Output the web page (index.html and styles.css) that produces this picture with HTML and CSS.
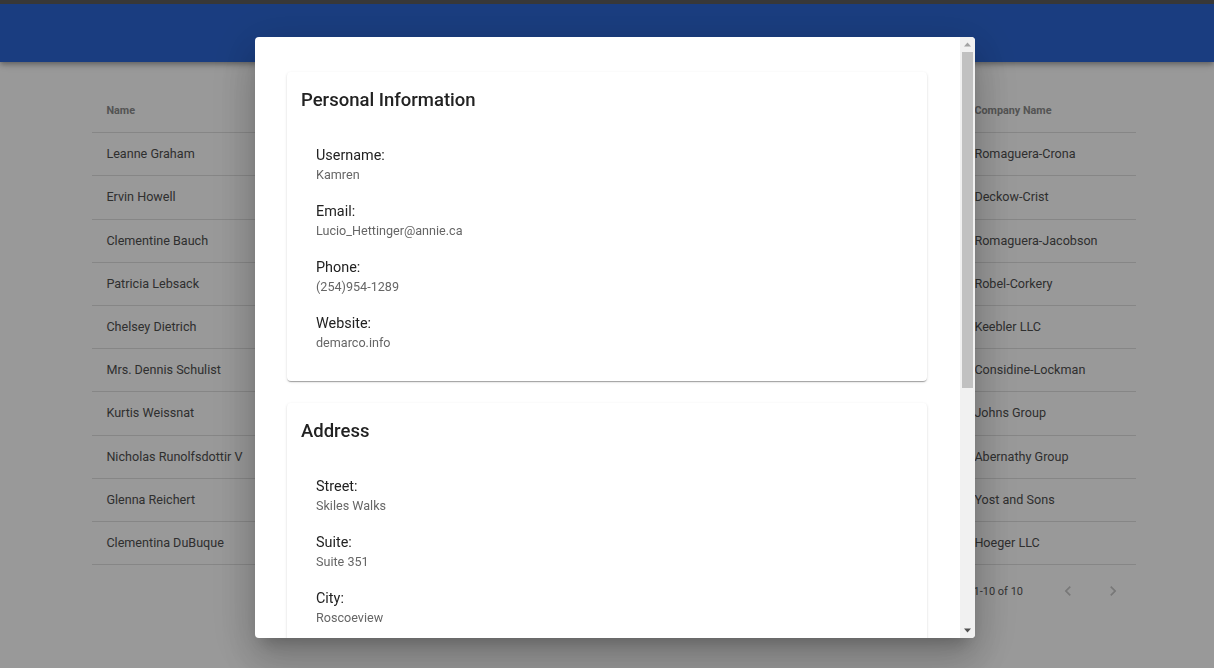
FILE: index.html
```html
<!DOCTYPE html>
<html lang="en">
<head>
<meta charset="utf-8">
<title>Users</title>
<link rel="stylesheet" href="styles.css">
</head>
<body>
<header class="topbar">
  <div class="topstrip"></div>
  <div class="appbar"></div>
</header>
<main class="content">
  <table class="users">
    <colgroup>
      <col class="c-name"><col class="c-user"><col class="c-email"><col class="c-city"><col class="c-company">
    </colgroup>
    <thead>
      <tr><th>Name</th><th>Username</th><th>Email</th><th>City</th><th>Company Name</th></tr>
    </thead>
    <tbody>
      <tr><td>Leanne Graham</td><td>Bret</td><td>Sincere@april.biz</td><td>Gwenborough</td><td>Romaguera-Crona</td></tr>
      <tr><td>Ervin Howell</td><td>Antonette</td><td>Shanna@melissa.tv</td><td>Wisokyburgh</td><td>Deckow-Crist</td></tr>
      <tr><td>Clementine Bauch</td><td>Samantha</td><td>Nathan@yesenia.net</td><td>McKenziehaven</td><td>Romaguera-Jacobson</td></tr>
      <tr><td>Patricia Lebsack</td><td>Karianne</td><td>Julianne.OConner@kory.org</td><td>South Elvis</td><td>Robel-Corkery</td></tr>
      <tr><td>Chelsey Dietrich</td><td>Kamren</td><td>Lucio_Hettinger@annie.ca</td><td>Roscoeview</td><td>Keebler LLC</td></tr>
      <tr><td>Mrs. Dennis Schulist</td><td>Leopoldo_Corkery</td><td>Karley_Dach@jasper.info</td><td>South Christy</td><td>Considine-Lockman</td></tr>
      <tr><td>Kurtis Weissnat</td><td>Elwyn.Skiles</td><td>Telly.Hoeger@billy.biz</td><td>Howemouth</td><td>Johns Group</td></tr>
      <tr><td>Nicholas Runolfsdottir V</td><td>Maxime_Nienow</td><td>Sherwood@rosamond.me</td><td>Aliyaview</td><td>Abernathy Group</td></tr>
      <tr><td>Glenna Reichert</td><td>Delphine</td><td>Chaim_McDermott@dana.io</td><td>Bartholomebury</td><td>Yost and Sons</td></tr>
      <tr><td>Clementina DuBuque</td><td>Moriah.Stanton</td><td>Rey.Padberg@karina.biz</td><td>Lebsackbury</td><td>Hoeger LLC</td></tr>
    </tbody>
  </table>
  <div class="pagination">
    <span class="range">1-10 of 10</span>
    <button class="pg-btn" aria-label="Previous page">
      <svg viewBox="0 0 24 24" width="24" height="24"><path d="M15.41 7.41 14 6l-6 6 6 6 1.41-1.41L10.83 12z"/></svg>
    </button>
    <button class="pg-btn" aria-label="Next page">
      <svg viewBox="0 0 24 24" width="24" height="24"><path d="M10 6 8.59 7.41 13.17 12l-4.58 4.59L10 18l6-6z"/></svg>
    </button>
  </div>
</main>

<div class="backdrop"></div>

<div class="modal" role="dialog">
  <div class="modal-body">
    <section class="card">
      <h2 class="card-title">Personal Information</h2>
      <div class="fields">
        <div class="field"><div class="label">Username:</div><div class="value">Kamren</div></div>
        <div class="field"><div class="label">Email:</div><div class="value">Lucio_Hettinger@annie.ca</div></div>
        <div class="field"><div class="label">Phone:</div><div class="value">(254)954-1289</div></div>
        <div class="field"><div class="label">Website:</div><div class="value">demarco.info</div></div>
      </div>
    </section>
    <section class="card">
      <h2 class="card-title">Address</h2>
      <div class="fields">
        <div class="field"><div class="label">Street:</div><div class="value">Skiles Walks</div></div>
        <div class="field"><div class="label">Suite:</div><div class="value">Suite 351</div></div>
        <div class="field"><div class="label">City:</div><div class="value">Roscoeview</div></div>
        <div class="field"><div class="label">Zipcode:</div><div class="value">33263</div></div>
      </div>
    </section>
    <section class="card">
      <h2 class="card-title">Company</h2>
      <div class="fields">
        <div class="field"><div class="label">Name:</div><div class="value">Keebler LLC</div></div>
        <div class="field"><div class="label">Catch Phrase:</div><div class="value">User-centric fault-tolerant solution</div></div>
        <div class="field"><div class="label">BS:</div><div class="value">revolutionize end-to-end systems</div></div>
      </div>
    </section>
  </div>
  <div class="scrollbar" aria-hidden="true">
    <div class="sb-btn">
      <svg viewBox="0 0 15 15" width="15" height="15"><path class="sb-up" d="M4 9.5h7L7.5 5.5z"/></svg>
    </div>
    <div class="sb-track"><div class="sb-thumb"></div></div>
    <div class="sb-btn">
      <svg viewBox="0 0 15 15" width="15" height="15"><path class="sb-down" d="M4 5.5h7L7.5 9.5z"/></svg>
    </div>
  </div>
</div>
</body>
</html>
```

FILE: styles.css
```css
* { box-sizing: border-box; }

html, body {
  margin: 0;
  padding: 0;
  background: #ffffff;
  font-family: Roboto, "Liberation Sans", Arial, sans-serif;
  overflow: hidden;
  height: 100%;
}

.topbar {
  display: flex;
  flex-direction: column;
  box-shadow: 0 2px 4px -1px rgba(0,0,0,0.2), 0 4px 5px 0 rgba(0,0,0,0.14), 0 1px 10px 0 rgba(0,0,0,0.12);
}
.topstrip { height: 4px; background: #5e5e5e; }
.appbar { height: 58px; background: #2c67d5; }

.content {
  padding: 28px 78px 0 92px;
}

.users {
  width: 1044px;
  border-collapse: collapse;
  table-layout: fixed;
}
.c-name { width: 200px; }
.c-user { width: 180px; }
.c-email { width: 267px; }
.c-city { width: 221px; }
.c-company { width: 176px; }

.users th,
.users td {
  text-align: left;
  padding: 11px 14.4px;
  line-height: 20.2px;
  border-bottom: 1px solid #e0e0e0;
  white-space: nowrap;
  overflow: hidden;
}
.users th {
  font-size: 10.8px;
  font-weight: 700;
  color: #8c8c8c;
}
.users td {
  font-size: 12.6px;
  color: #4f4f4f;
}

.pagination {
  width: 1044px;
  height: 52px;
  display: flex;
  align-items: center;
  justify-content: flex-end;
  padding-right: 1px;
}
.range {
  font-size: 11px;
  color: #555555;
  margin-right: 22px;
}
.pg-btn {
  width: 45px;
  height: 40px;
  border: 0;
  background: transparent;
  padding: 0;
  display: flex;
  align-items: center;
  justify-content: center;
}
.pg-btn svg { width: 20px; height: 20px; fill: #c8c8c8; }

.backdrop {
  position: fixed;
  inset: 0;
  background: rgba(0,0,0,0.4);
}

.modal {
  position: fixed;
  left: 255px;
  top: 37px;
  width: 720px;
  height: 601px;
  background: #ffffff;
  border-radius: 4px;
  overflow: hidden;
  display: flex;
  box-shadow: 0 11px 15px -7px rgba(0,0,0,0.2), 0 24px 38px 3px rgba(0,0,0,0.14), 0 9px 46px 8px rgba(0,0,0,0.12);
}

.modal-body {
  flex: 1;
  min-width: 0;
  overflow: hidden;
  padding: 35px 33px 35px 32px;
  display: flex;
  flex-direction: column;
  gap: 22px;
}

.scrollbar {
  flex: none;
  width: 15px;
  display: flex;
  flex-direction: column;
  background: #f1f1f1;
}
.sb-btn {
  flex: none;
  height: 15px;
  display: flex;
}
.sb-up { fill: #a3a3a3; }
.sb-down { fill: #505050; }
.sb-track {
  flex: 1;
  padding: 0 2px;
}
.sb-thumb {
  height: 336px;
  background: #c1c1c1;
}

.card {
  flex: none;
  background: #ffffff;
  border-radius: 4px;
  box-shadow: 0 2px 1px -1px rgba(0,0,0,0.2), 0 1px 1px 0 rgba(0,0,0,0.14), 0 1px 3px 0 rgba(0,0,0,0.12);
  padding: 16px 14px 11px 14px;
}

.card-title {
  margin: 0;
  font-size: 18.5px;
  font-weight: 500;
  line-height: 24px;
  color: #222222;
}

.fields {
  padding: 34px 15px 0 15px;
}

.field { margin-bottom: 18px; }

.label {
  font-size: 14.4px;
  line-height: 20px;
  color: #222222;
}
.value {
  font-size: 12.6px;
  line-height: 18px;
  color: #666666;
}
```
